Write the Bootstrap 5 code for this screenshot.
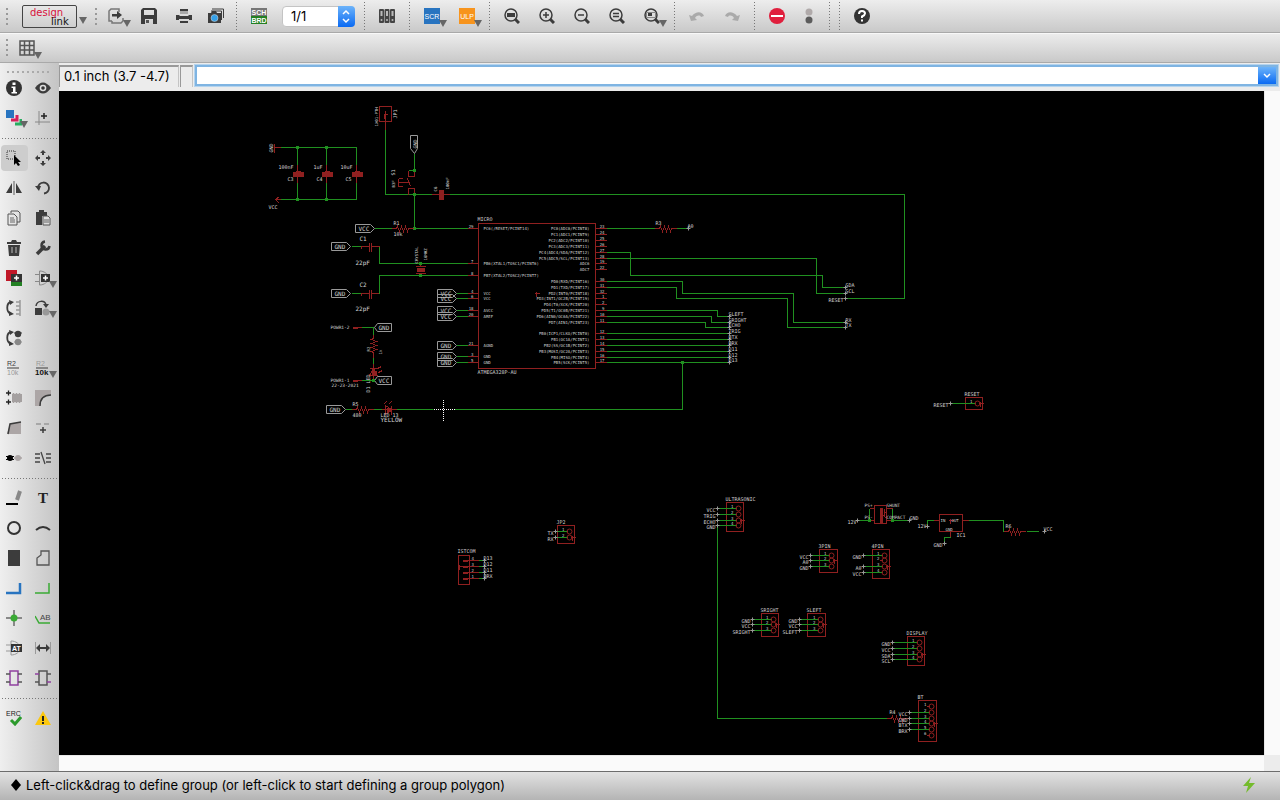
<!DOCTYPE html>
<html lang="en">
<head>
<meta charset="utf-8">
<meta name="viewport" content="width=device-width, initial-scale=1">
<title>Schematic editor</title>
<link rel="stylesheet" href="https://cdn.jsdelivr.net/npm/bootstrap@5.3.0/dist/css/bootstrap.min.css">
<style>
body{font-family:Inter,"Liberation Sans",sans-serif;font-size:13px;line-height:16px;color:#000;background:#ececec}
.bar{background:linear-gradient(#ededed,#c9c9c9);border-bottom:1px solid #a9a9a9}
.bar-top{height:33px;padding-left:2px}
.bar-sub{height:30px;padding-left:2px;box-shadow:inset 0 1px #f8f8f8}
.tool{border:0;background:none;padding:0;height:30px;width:35px;position:relative;display:flex;align-items:center;justify-content:center;color:#3c3c3c;flex:none}
.tool.slim{width:30px}
.tool svg,.pick svg{display:block}
.drop::after{content:"";position:absolute;left:calc(50% + 7px);top:19px;border:4px solid transparent;border-top:7px solid #666;border-bottom:0}
.sep{width:10px;height:28px;flex:none;background:repeating-linear-gradient(#777 0 1px,transparent 1px 3px) center/1px 100% no-repeat}
.grip{width:10px;height:17px;flex:none;background:repeating-linear-gradient(#999 0 2px,transparent 2px 5px) center/2px 100% no-repeat}
.brand{width:55px;height:23px;border:1px solid #444;border-radius:2px;background:none;padding:0;position:relative;font:10px/10px "DejaVu Sans",sans-serif;color:#d8103c;margin-left:10px}
.brand span{position:absolute;left:7px;top:2px}
.brand span+span{left:28px;top:11px;color:#111}
.tool.brandcaret{width:14px}
.brandcaret::after{left:2px;top:16px}
.pick{position:relative;width:73px;margin:0 4px 0 6px}
.pick select{appearance:none;width:100%;height:21px;border:1px solid #c4c4c4;border-radius:4px;background:#fff;padding:0 8px;font-size:13px;line-height:18px;color:#000}
.pick svg{position:absolute;right:0;top:0;pointer-events:none}
.palette{width:59px;flex:none;padding-right:2px;background:linear-gradient(90deg,#efefef,#c4c4c4)}
.palette .tool{width:50%}
.palette .drop::after{top:18px;left:calc(50% + 6px)}
.rule{height:10px;margin:0 0 0 2px;background:repeating-linear-gradient(90deg,#777 0 1px,transparent 1px 3px) center/100% 1px no-repeat}
.topgrip{height:10px;margin:4px 5px -4px 7px;background:repeating-linear-gradient(90deg,#aaa 0 2px,transparent 2px 5px) center/100% 2px no-repeat}
.tool.picked::before{content:"";position:absolute;inset:2px 1px;border-radius:4px;background:#cdcdcd}
.tool.picked svg{position:relative}
.cmd{height:28px;padding:2px 2px 4px 0}
.well{border:solid #999;border-width:2px 0 0 1px;border-right:1px solid #c4c4c4;padding:0 4px;line-height:19px;width:120px;white-space:nowrap}
.well.tiny{width:13px;margin:0 2px 0 1px}
.combo{border:2px solid #7fb4e2;box-shadow:0 0 0 1px #b5d4ee;background:#fff;height:21px}
.combo input{border:0;outline:0;min-width:0;padding:0 4px}
.combo button{width:18px;border:0;padding:0;background:linear-gradient(#6cb3fa,#0a6af3);display:flex;align-items:center;justify-content:center}
.board{background:#000;min-height:0}
.vbar{width:16px;flex:none;background:#fafafa;border-left:1px solid #e8e8e8}
.hbar{height:16px;background:#fafafa;border-top:1px solid #e8e8e8;margin-right:16px}
.status{height:29px;border-top:1px solid #6d6d6d;background:linear-gradient(#e2e2e2,#b4b4b4);padding:0 24px 2px 10px}
.wire{stroke:#209020;fill:none;shape-rendering:crispEdges}
.part{stroke:#902020;fill:none;shape-rendering:crispEdges}
.solid{fill:#902020;shape-rendering:crispEdges}
.knot{fill:#209020;shape-rendering:crispEdges}
.flag{stroke:#999;fill:none}
.ink{fill:#d4d4d4;font-family:"DejaVu Sans Mono",monospace}
</style>
</head>
<body class="vh-100 d-flex flex-column overflow-hidden">

<header class="bar bar-top d-flex align-items-center">
  <span class="grip"></span>
  <button class="brand" type="button" aria-label="design link"><span>design</span><span>link</span></button>
  <button class="tool drop brandcaret" type="button" aria-label="design link menu"></button>
  <span class="grip"></span>
  <button class="tool slim drop" type="button" aria-label="Export"><svg width="16" height="16" viewBox="0 0 16 16"><path d="M11 4V1H3L1 3v10h3M4 13v2h9l2-2v-3" fill="none" stroke="#777" stroke-width="1.500"/><path d="M4 6h5V3l5 4-5 4V8.500H4z" fill="#3c3c3c"/></svg></button>
  <button class="tool" type="button" aria-label="Save"><svg width="16" height="16" viewBox="0 0 16 16"><path fill="#3c3c3c" fill-rule="evenodd" d="M2 0h12l2 2v14H0V2zM3 2v5h10V2zM4 11v5h8v-5z"/><path d="M5 12h3v3H5z" fill="#555"/></svg></button>
  <button class="tool" type="button" aria-label="Print"><svg width="16" height="16" viewBox="0 0 16 16"><path fill="#3c3c3c" d="M4 1h8v2H4zM0 7h3l1 1h8l1-1h3v5h-3v-1H3v1H0zM4 13h8v2H4z"/><path d="M4 3h8v3H4z" fill="#aaa"/></svg></button>
  <button class="tool slim" type="button" aria-label="Capture"><svg width="16" height="16" viewBox="0 0 16 16"><path d="M4 1h11.500v9" fill="none" stroke="#3c3c3c"/><path fill="#3c3c3c" d="M0 5h3l1-2h4l1 2h4v10H0z"/><path d="M3 3h10.500v9" fill="none" stroke="#3c3c3c"/><circle cx="6.500" cy="10" r="3.500" fill="#35a0e8" stroke="#ddd" stroke-width=".5"/></svg></button>
  <span class="sep"></span>
  <button class="tool" type="button" aria-label="Schematic / board"><svg width="16" height="16" viewBox="0 0 16 16"><path fill="#777" d="M0 0h16v8H0z"/><path fill="#238023" d="M0 8h16v8H0z"/><g fill="#fff" font-family="Liberation Sans" font-weight="700" font-size="7" text-anchor="middle"><text x="8" y="7">SCH</text><text x="8" y="15">BRD</text></g></svg></button>
  <div class="pick"><select aria-label="Sheet"><option>1/1</option></select>
    <svg width="17" height="21" viewBox="0 0 17 21"><defs><linearGradient id="blue" x2="0" y2="1"><stop stop-color="#6cb3fa"/><stop offset="1" stop-color="#0a6af3"/></linearGradient></defs><path fill="url(#blue)" d="M0 0h13q4 0 4 4v13q0 4-4 4H0z"/><path d="M5 8l3-3 3 3M5 13l3 3 3-3" fill="none" stroke="#fff" stroke-width="1.500"/></svg></div>
  <span class="sep"></span>
  <button class="tool" type="button" aria-label="Libraries"><svg width="16" height="16" viewBox="0 0 16 16"><g fill="#444"><rect y="1" width="5" height="14" rx="1"/><rect x="5.500" y="1" width="5" height="14" rx="1"/><rect x="11" y="1" width="5" height="14" rx="1"/></g><g fill="#bbb"><path d="M1.500 3h2v5h-2zM7 3h2v5H7zM12.500 3h2v5h-2z"/><circle cx="2.500" cy="12" r="1"/><circle cx="8" cy="12" r="1"/><circle cx="13.500" cy="12" r="1"/></g></svg></button>
  <span class="sep"></span>
  <button class="tool drop" type="button" aria-label="Run script"><svg width="16" height="16" viewBox="0 0 16 16"><path fill="#2874c0" d="M0 0h16v16H0z"/><text x="8" y="11" fill="#fff" font-family="Liberation Sans" font-size="7" text-anchor="middle">SCR</text></svg></button>
  <button class="tool drop" type="button" aria-label="Run ULP"><svg width="16" height="16" viewBox="0 0 16 16"><path fill="#f7941d" d="M0 0h16v16H0z"/><text x="8" y="11" fill="#fff" font-family="Liberation Sans" font-size="7" text-anchor="middle">ULP</text></svg></button>
  <span class="sep"></span>
  <button class="tool" type="button" aria-label="Zoom to fit"><svg width="16" height="16" viewBox="0 0 16 16"><circle cx="7" cy="7" r="6" fill="none" stroke="#3c3c3c" stroke-width="1.500"/><path d="M11 11l4 4" stroke="#3c3c3c" stroke-width="3"/><path d="M3 5h8v4H3z" fill="#3c3c3c"/></svg></button>
  <button class="tool" type="button" aria-label="Zoom in"><svg width="16" height="16" viewBox="0 0 16 16"><circle cx="7" cy="7" r="6" fill="none" stroke="#3c3c3c" stroke-width="1.500"/><path d="M11 11l4 4" stroke="#3c3c3c" stroke-width="3"/><path d="M4 7h6M7 4v6" stroke="#3c3c3c" stroke-width="1.500"/></svg></button>
  <button class="tool" type="button" aria-label="Zoom out"><svg width="16" height="16" viewBox="0 0 16 16"><circle cx="7" cy="7" r="6" fill="none" stroke="#3c3c3c" stroke-width="1.500"/><path d="M11 11l4 4" stroke="#3c3c3c" stroke-width="3"/><path d="M4 7h6" stroke="#3c3c3c" stroke-width="1.500"/></svg></button>
  <button class="tool" type="button" aria-label="Redraw"><svg width="16" height="16" viewBox="0 0 16 16"><circle cx="7" cy="7" r="6" fill="none" stroke="#3c3c3c" stroke-width="1.500"/><path d="M11 11l4 4" stroke="#3c3c3c" stroke-width="3"/><path d="M4 5.500h6M4 8.500h6" stroke="#3c3c3c" stroke-width="1.300"/></svg></button>
  <button class="tool drop" type="button" aria-label="Zoom select"><svg width="16" height="16" viewBox="0 0 16 16"><circle cx="7" cy="7" r="6" fill="none" stroke="#3c3c3c" stroke-width="1.500"/><path d="M11 11l4 4" stroke="#3c3c3c" stroke-width="3"/><path d="M2.500 4.500h9v5h-9z" fill="none" stroke="#888"/><path d="M4 5h4v3H4z" fill="#3c3c3c"/></svg></button>
  <span class="sep"></span>
  <button class="tool" type="button" aria-label="Undo"><svg width="16" height="16" viewBox="0 0 16 16"><path fill="#aaa" d="M0 7l2 6 6-1-2-2c2-3 5-3 6-1l3-1C13 3 7 3 3 8z"/></svg></button>
  <button class="tool" type="button" aria-label="Redo"><svg width="16" height="16" viewBox="0 0 16 16"><path fill="#aaa" d="M16 7l-2 6-6-1 2-2C8 7 5 7 4 9L1 8C3 3 9 3 13 8z"/></svg></button>
  <span class="sep"></span>
  <button class="tool" type="button" aria-label="Stop"><svg width="16" height="16" viewBox="0 0 16 16"><circle cx="8" cy="8" r="8" fill="#e01f3d"/><path d="M2 7h12v2H2z" fill="#fff"/></svg></button>
  <button class="tool slim" type="button" aria-label="Go"><svg width="16" height="16" viewBox="0 0 16 16"><circle cx="8" cy="4" r="3.500" fill="#b0aaaa"/><circle cx="8" cy="12" r="3.500" fill="#5c5c5c"/></svg></button>
  <span class="sep"></span><span class="sep"></span>
  <button class="tool" type="button" aria-label="Help"><svg width="16" height="16" viewBox="0 0 16 16"><circle cx="8" cy="8" r="8" fill="#333"/><path d="M5 6q0-3 3-3t3 2.500q0 1.500-3 3V10" fill="none" stroke="#fff" stroke-width="2"/><path d="M7 11.500h2v2H7z" fill="#fff"/></svg></button>
</header>

<div class="bar bar-sub d-flex align-items-center">
  <span class="grip"></span>
  <button class="tool slim drop" type="button" aria-label="Grid"><svg width="16" height="16" viewBox="0 0 16 16"><path d="M1 1h14v14H1zM1 5.500h14M1 10h14M5.500 1v14M10.500 1v14" fill="none" stroke="#555" stroke-width="1.500"/></svg></button>
</div>

<div class="d-flex flex-grow-1" style="min-height:0">
  <nav class="palette" aria-label="Drawing tools">
    <div class="topgrip"></div>
    <div id="tools" class="pt-1"></div>
  </nav>
  <main class="d-flex flex-column flex-grow-1" style="min-width:0">
    <div class="cmd d-flex">
      <div class="well">0.1 inch (3.7 -4.7)</div>
      <div class="well tiny"></div>
      <div class="combo d-flex flex-grow-1">
        <input type="text" class="flex-grow-1" aria-label="Command line">
        <button type="button" aria-label="History"><svg width="8" height="6" viewBox="0 0 8 6"><path d="M1 1l3 3 3-3" fill="none" stroke="#fff" stroke-width="1.500"/></svg></button>
      </div>
    </div>
    <div class="d-flex flex-grow-1" style="min-height:0">
      <div class="board flex-grow-1"><svg id="sheet" class="d-block w-100 h-100" viewBox="59 91 1205 664" role="img" aria-label="Schematic"></svg></div>
      <div class="vbar"></div>
    </div>
    <div class="hbar"></div>
  </main>
</div>

<footer class="status d-flex align-items-center justify-content-between">
  <span class="d-flex align-items-center"><svg class="me-1" width="12" height="12" viewBox="0 0 12 12"><path d="M6 0l5 6-5 6-5-6z"/></svg>Left-click&amp;drag to define group (or left-click to start defining a group polygon)</span>
  <svg width="14" height="16" viewBox="0 0 14 16"><path d="M9 0L1 9h5l-2 7 9-10H7z" fill="#74bb2c"/></svg>
</footer>

<script>
// Tool palette: [name, icon markup, extra class]; '-' draws a divider
const D='#3c3c3c', S=(d,c=D,w=1.5)=>`<path d="${d}" fill="none" stroke="${c}" stroke-width="${w}"/>`, F=(d,c=D)=>`<path d="${d}" fill="${c}"/>`;
const T=(x,y,s,c=D,z=7,k='')=>`<text x="${x}" y="${y}" font-family="Liberation Sans" font-size="${z}" fill="${c}" ${k}>${s}</text>`;
const tools=[
['Info','<circle cx="8" cy="8" r="8" fill="#333"/>'+F('M6.500 2.500h3v2.500h-3zM5.500 6.500h4V12H11v1.500H5.500V12H7V8H5.500z','#fff')],
['Show',F('M0 8Q8-3 16 8 8 19 0 8z')+'<circle cx="8" cy="8" r="3.300" fill="#ddd"/><circle cx="8" cy="8" r="1.800" fill="#333"/>'],
['Layers',F('M0 0h8v8H0z','#2874c0')+S('M11 5v5H5','#d81e5b',3)+S('M15 9v5H9','#27ae60',3),'drop'],
['Mark',S('M4 1v14M0 12h15','#888',1)+S('M6 6h6M9 3v6','#222')],'-',
['Group','<path d="M1 1h8v8H1z" fill="none" stroke="#333" stroke-dasharray="1 1"/>'+F('M8 5v10l2-2 2 3 2-1-2-3h3z','#000'),'picked'],
['Move',F('M8 0l3 3H9v2H7V3H5zM8 16l3-3H9v-2H7v2H5zM0 8l3-3v2h2v2H3v2zM16 8l-3-3v2h-2v2h2v2z')],
['Mirror',F('M6 3v10H0zM10 3v10h6z')+S('M8 1v14','#888')],
['Rotate',S('M3 8a5.500 5.500 0 1 1 6 5.500',D,1.8)+F('M0 6h6l-2 5z')],
['Copy',S('M5 3V1h7l2 2v9h-3M2 4h6l3 3v8H2z','#555',1)+S('M4 8h4M4 10h5M4 12h5','#666',1)],
['Paste',F('M1 2h3V0h5v2h3v4H7v9H1z')+'<path d="M8 6h5l2 2v7H8z" fill="#ddd" stroke="#555"/>'+S('M9 10h5M9 12h5','#666',1)],
['Delete',F('M1 2h4l1-2h4l1 2h4v2H1zM2 5h12l-1 11H3z')+S('M6 7v6M10 7v6','#bbb',1)],
['Change',S('M2 14l8-8','#3c3c3c',3.500)+S('M10 1.500A4 4 0 1 0 14.500 6',D,2.500)],
['Add',F('M0 0h11v11H0z','#c01828')+F('M5 10h11v6H5z','#238023')+F('M5 4h11v8H5z','#333')+S('M8 8h5M10.500 5.500v5','#fff')],
['Replace',S('M0 4.500h5M0 11.500h5M4.500 1v14c5 0 8-3 10-7-2-4-5-7-10-7','#888',1)+F('M6 4h9v8H6z','#333')+S('M8 8h5M10.500 5.500v5','#fff'),'drop'],
['Pin swap',S('M5 2C0 3 0 12 5 14',D,1.8)+F('M3 0l5 2-4 3zM3 11l5 3-5 2z')+S('M14 0v16M10 2h4M10 6h4M10 10h4M10 14h4','#999',1.500)],
['Gate swap',S('M1 6C2 0 10 0 11 5')+F('M8 4h6l-3 4zM0 8h7v7H0z')+'<circle cx="11" cy="12" r="3.500" fill="#999"/>','drop'],
['Replace gates',S('M5 2C0 3 0 12 5 14',D,1.8)+F('M3 0l5 2-4 3zM3 11l5 3-5 2z')+'<circle cx="12" cy="4" r="3.200" fill="#3c3c3c"/><circle cx="12" cy="12" r="3.200" fill="#888"/>'+S('M8 3h8','#3c3c3c',1)+S('M8 12h8','#888',1)],
null,
['Name',T(1,6,'R2')+S('M1 8h12',D,1)+T(1,15,'10k','#999')],
['Value',T(1,6,'R2','#999')+S('M1 8h12',D,1)+T(0,15,'10k','#111',8,'font-weight="700"'),'drop'],
['Smash',F('M6 4h10v8H6z','#a5a0a0')+S('M7.500 3v10M10.500 3v10M13.500 3v10','#a5a0a0',1.500)+S('M0 3h5M2.500 .5v5M0 12h5M2.500 9.500v5','#222',1.300)],
['Miter',F('M0 0h16v5Q5 5 5 16H0z','#aca6a6')+S('M5 16Q5 5 16 5')],
['Split',F('M4 4l11-2v12H1z','#aca6a6')+S('M2 14L4 4l11-2')],
['Optimize',S('M1 4h5M9 4h5','#999')+S('M5 10h6M8 7v6',D,1.500)],
['Invoke',F('M0 6h8v1H0zM0 9h8v1H0z','#000')+'<circle cx="4" cy="8" r="3" fill="#000"/><circle cx="12" cy="8" r="3" fill="#aca6a6"/>'+S('M8 8h8','#aca6a6')],
['Divide',S('M0 4h5M0 8h5M0 12h5M11 4h5M11 8h5M11 12h5M6 2l4 12','#444',1.300)],'-',
['Line',S('M0 14h12','#000',2)+S('M11 10l3-9','#888',4)],
['Text','<text x="8" y="13" text-anchor="middle" font-family="Liberation Serif" font-size="15" font-weight="700" fill="#222">T</text>'],
['Circle','<circle cx="8" cy="8" r="6" fill="none" stroke="#333" stroke-width="2"/>'],
['Arc',S('M1 10Q8 4 15 10','#333',2)],
['Rectangle',F('M2 0h12v16H2z')],
['Polygon',S('M2 15V8l4-3V1h8v14z','#555',1.300)],
['Bus',S('M0 13h14V3','#2874c0',2.5)],
['Net',S('M0 13h14V3','#3aaa35',1.500)],
['Junction',S('M8 0v16M0 8h16','#888',2)+'<circle cx="8" cy="8" r="3.500" fill="#3aaa35"/>'],
['Label',S('M0 6l4 7h11','#3aaa35',1.500)+T(5,10,'AB','#444',8)],
['Attribute',S('M0 5h5M0 11h5M5 1v14c5 0 9-3 9-7s-4-7-9-7','#999',1)+F('M5 4h11v8H5z','#333')+T(6,11,'AT','#fff',7,'font-weight="700"')],
['Dimension',S('M.5 2v12M15.500 2v12','#999',1)+F('M1 8l4-4v3h6V4l4 4-4 4V9H5v3z')],
['Module',S('M4 1h8v14H4z','#9040a0',1.500)+S('M0 4h4M0 12h4M12 4h4M12 12h4','#555',1.500)],
['Port',S('M4 1h8v14H4z','#555',1.500)+S('M0 4h4M12 12h4','#9040a0',1.500)+S('M0 12h4M12 4h4','#555',1.500)],'-',
['ERC',T(0,6,'ERC','#222',7)+S('M5 10l4 4 6-7','#2c9a2c',3)],
['Errors',F('M8 1l8 14H0z','#fcc80e')+S('M8 6v5M8 12v2','#222',2)]
];
let html='',n=0;
for(const t of tools){
  if(t==='-'){html+='<div class="rule"></div>';continue}
  if(n%2===0)html+='<div class="d-flex">';
  html+=t?`<button type="button" class="tool ${t[2]||''}" aria-label="${t[0]}"><svg width="16" height="16" viewBox="0 0 16 16">${t[1]}</svg></button>`:'<span></span>';
  if(n%2===1)html+='</div>';
  n++;
}
const palette=document.getElementById('tools');
palette.classList.remove('pt-1');
palette.innerHTML=html;

// Schematic drawing helpers, in sheet units
let g='';
const wire=d=>g+=`<path class="wire" d="${d}"/>`, part=d=>g+=`<path class="part" d="${d}"/>`;
const solid=(x,y,w,h)=>g+=`<rect class="solid" x="${x}" y="${y}" width="${w}" height="${h}"/>`;
const knot=(x,y)=>g+=`<rect class="knot" x="${x-1.5}" y="${y-1.5}" width="3" height="3"/>`;
const ink=(x,y,s,z=5,a='start')=>g+=`<text class="ink" x="${x}" y="${y}" font-size="${z}" text-anchor="${a}">${s}</text>`;
const up=(x,y,s,z=5)=>g+=`<text class="ink" transform="translate(${x} ${y}) rotate(-90)" font-size="${z}">${s}</text>`;
const tick=(x,y)=>g+=`<path class="flag" d="M${x-2} ${y}h4M${x} ${y-2}v4"/>`;
const tag=(x,y,s)=>{g+=`<path class="flag" d="M${x} ${y-4}h15l4 4-4 4h-15z"/>`;ink(x+3,y+2,s,6)};
const tagL=(x,y,s)=>{g+=`<path class="flag" d="M${x+17} ${y-4}h-14l-3 4 3 4h14z"/>`;ink(x+4,y+2,s,6)};
const res=(x,y)=>part(`M${x} ${y}h5l1-2 2 5 2-5 2 5 2-5 2 5 1-3h5`);
const plus=(x,y)=>part(`M${x-2} ${y}h5M${x} ${y-2}v5`);

// decoupling capacitors
wire('M280 147H356V199H280M297 147V199M326 147V199');
part('M274 143v9M274 147h6M280 199h-5M279 196l-4 3 4 4');
for(const x of [297,326,356]){part(`M${x} 164v18`);solid(x-5,171,11,5);solid(x-2,170,5,1)}
for(const x of [297,326]){knot(x,147);knot(x,199)}
ink(293,168,'100nF',5,'end');ink(322,168,'1uF',5,'end');ink(352,168,'10uF',5,'end');
ink(287,180,'C3');ink(316,180,'C4');ink(345,180,'C5');ink(268,208,'VCC');up(272,152,'GND');
// jumper, reset button and series capacitor
part('M379 106h12v15h-12zM385 110v19M383 114h4M384 113v5');up(377,126,'1X01-PTH',4);up(396,118,'JP1',5);
wire('M385 129V194H431M449 194H904V298H846M414 153V170H408M414 194V228M414 228H467');
g+='<path class="flag" d="M410 135h7v13l-3 5-4-5z"/>';up(416,148,'GND',5);
part('M414 170v6h-6v-6M398 178h4M398 178v8h4M398 182h11M407 178l3 8M408 194v-6h6v6M431 194h18');
solid(438,189,5,10);knot(414,170);knot(414,194);knot(414,228);
up(394,175,'S1');up(394,187,'B3F',4);up(436,191,'C6',4);up(448,189,'100nF',4);
// left-hand nets
tag(355,228,'VCC');wire('M374 228H391');res(391,228);ink(393,224,'R1');ink(393,235,'10k');
for(const [y,c,b] of [[246,'C1',240],[293,'C2',286]]){
  tag(331,y,'GND');wire(`M351 ${y}H361`);part(`M361 ${y}h8M369 ${y-4}v9M371 ${y-4}v9M371 ${y}h8M361 ${y-1}v3`);ink(359,b,c,6)}
ink(355,264,'22pF',6);ink(355,310,'22pF',6);
wire('M379 246V263H467M379 293V275H467');
part('M420 263v3M415 266h10M417 268h7v3h-7zM415 273h10M420 273v3');solid(417,268,7,3);knot(420,263);knot(420,275);
up(417,263,'CRYSTAL',4);up(426,260,'16MHZ',4);
for(const [y,s] of [[293,'VCC'],[298,'VCC'],[310,'VCC'],[316,'VCC'],[345,'GND'],[356,'GND'],[362,'GND']]){tag(437,y,s);wire(`M456 ${y}H467`)}
// controller
part('M478 223H595V368H478z');plus(536,293);
ink(477,220,'MICRO');ink(477,373,'ATMEGA328P-AU');
for(const [y,p,s] of [[228,29,'PC6(/RESET/PCINT14)'],[263,7,'PB6(XTAL1/TOSC1/PCINT6)'],[275,8,'PB7(XTAL2/TOSC2/PCINT7)'],[293,4,'VCC'],[298,6,'VCC'],[310,18,'AVCC'],[316,20,'AREF'],[345,21,'AGND'],[356,3,'GND'],[362,5,'GND']]){
  part(`M467 ${y}H478`);ink(473,y-1,p,4,'end');ink(483,y+1,s,4)}
const rp=[[228,23,'PC0(ADC0/PCINT8)'],[234,24,'PC1(ADC1/PCINT9)'],[240,25,'PC2(ADC2/PCINT10)'],[246,26,'PC3(ADC3/PCINT11)'],[252,27,'PC4(ADC4/SDA/PCINT12)'],[258,28,'PC5(ADC5/SCL/PCINT13)'],[263,19,'ADC6'],[269,22,'ADC7'],[281,30,'PD0(RXD/PCINT16)'],[287,31,'PD1(TXD/PCINT17)'],[293,32,'PD2(INT0/PCINT18)'],[298,1,'PD3(INT1/OC2B/PCINT19)'],[304,2,'PD4(T0/XCK/PCINT20)'],[310,9,'PD5(T1/OC0B/PCINT21)'],[316,10,'PD6(AIN0/OC0A/PCINT22)'],[322,11,'PD7(AIN1/PCINT23)'],[333,12,'PB0(ICP1/CLKO/PCINT0)'],[339,13,'PB1(OC1A/PCINT1)'],[345,14,'PB2(SS/OC1B/PCINT2)'],[351,15,'PB3(MOSI/OC2A/PCINT3)'],[357,16,'PB4(MISO/PCINT4)'],[362,17,'PB5(SCK/PCINT5)']];
for(const [y,p,s] of rp){part(`M595 ${y}H606`);ink(604,y-1,p,4,'end');ink(589,y+1,s,4,'end')}
// right-hand nets
wire('M606 228H654M676 228H688M606 252H630V275H822V287H846M606 258H816V293H846M606 281H682V293H793V322H846M606 287H676V298H787V327H846');
wire('M606 310H717V316H729M606 316H711V322H729M606 322H705V327H729M606 333H729M606 339H729M606 345H729M606 351H729M606 357H729M606 362H729M682 362V409H396');
knot(682,362);res(654,228);ink(655,224,'R3');tick(688,228);ink(687,227,'A0');
[[316,'SLEFT'],[322,'SRIGHT'],[327,'ECHO'],[333,'TRIG'],[339,'BTX'],[345,'BRX'],[351,'D11'],[357,'D12'],[362,'D13']].forEach(([y,s])=>{tick(729,y);ink(728,y-1,s)});
[[287,'SDA'],[293,'SCL'],[322,'RX'],[327,'TX']].forEach(([y,s])=>{tick(845,y);ink(845,y-1,s)});
ink(843,301,'RESET',5,'end');tick(845,298);
// power connector and indicator
wire('M361 327H373V334M373 357V363M361 380H373');
for(const y of [327,380]){solid(352,y-1,5,2);part(`M352 ${y}h9`)}
part('M373 334v4l-2 1 5 2-5 2 5 2-5 2 5 2-5 2 2 1v5M373 363v17M369 375h8l-4-7zM369 368h9M377 368l4-2M378 372l4-2');
solid(371,370,5,4);tagL(374,327,'GND');tagL(374,380,'VCC');knot(373,380);
ink(330,328,'POWR1-2',4.5);ink(330,381,'POWR1-1',4.5);ink(331,386,'22-23-2021',4.5);
up(369,351,'R2',4);up(381,354,'1k',4);up(369,392,'D1 LED',5);
tag(326,409,'GND');wire('M345 409H352M372 409H381');res(351,409);
part('M381 409h15M385 405v9l6-5zM391 405v9M383 404l3-3M388 404l3-3');solid(386,407,4,4);
ink(352,405,'R5');ink(352,416,'480');ink(380,416,'LED_13');ink(380,421,'YELLOW',6);
g+='<path d="M433 409h21M443 399v21" stroke="#000" stroke-width="3"/><path d="M433 409h21M443 399v21" stroke="#fff" stroke-dasharray="1 1" shape-rendering="crispEdges"/>';
// pin headers: name, box, pin column, wire start, pins [y, net]
const headers=[
['ULTRASONIC',726,502,17,29,738,717,[[508,'VCC'],[514,'TRIG'],[520,'ECHO'],[525,'GND']]],
['3PIN',819,549,18,23,831,810,[[555,'VCC'],[560,'A0'],[566,'GND']]],
['4PIN',872,549,17,29,884,863,[[555,'GND'],[560,''],[566,'A0'],[572,'VCC']]],
['SRIGHT',761,613,17,23,773,752,[[619,'GND'],[624,'VCC'],[630,'SRIGHT']]],
['SLEFT',807,613,18,23,820,799,[[619,'GND'],[624,'VCC'],[630,'SLEFT']]],
['DISPLAY',907,636,17,29,919,892,[[642,'GND'],[648,'VCC'],[654,'SDA'],[659,'SCL']]],
['BT',918,700,18,41,931,909,[[706,''],[712,'VCC'],[718,'GND'],[723,'BTX'],[729,'BRX'],[735,'']]],
['JP2',557,525,17,18,569,555,[[531,'TX'],[537,'RX']]],
['RESET',965,397,17,12,977,950,[[403,'RESET']]]];
wire('M717 525V718H886');res(886,718);ink(889,713,'R4');
for(const [s,x,y,w,h,c,a,pins] of headers){
  part(`M${x} ${y}h${w}v${h}h${-w}z`);ink(x-1,y-2,s);
  pins.forEach(([py,net],i)=>{
    g+=`<circle cx="${c}" cy="${py}" r="2.500" fill="none" stroke="#902020"/>`;part(`M${c-5} ${py}h3`);
    ink(c-5,py-1,i+1,4,'end');
    if(net){wire(`M${a} ${py}H${c-3}`);tick(a,py);ink(a-2,py+3,net,5,'end')}
  });
  plus(c+3,pins[Math.floor(pins.length/2)][0]);
}
// programming header
part('M458 555h11v29h-11z');ink(457,552,'ISTCOM');plus(459,566);
[[560,'D13',4],[566,'D12',3],[572,'D11',2],[578,'BRX',1]].forEach(([y,s,p])=>{part(`M462 ${y}h16`);solid(462,y-1,5,2);wire(`M478 ${y}h6`);tick(484,y);ink(483,y-1,s);ink(471,y-1,p,4)});
// current shunt
wire('M857 520H869V508M909 520H892V508');part('M874 505h12v18h-12zM869 508h5M869 520h5M886 508h6M886 520h6M884 508v8M885 512l-2 3 3 3');
solid(879,507,3,15);knot(869,520);knot(892,520);tick(857,520);tick(909,520);
ink(864,506,'PS+',4.5);ink(886,506,'SHUNT',4.5);ink(864,518,'PS-',4.5);ink(886,518,'COMPACT',4.5);
ink(856,523,'12V',5,'end');ink(909,519,'GND');
// regulator
part('M939 514h23v17h-23zM933 520h6M962 520h6M950 531v6');plus(950,520);
wire('M927 525V520H933M968 520H1003V531M950 537H944V543M1026 531H1038');res(1003,531);
tick(927,526);tick(944,543);tick(1044,531);
ink(926,527,'12V',5,'end');ink(942,546,'GND',5,'end');ink(956,536,'IC1');ink(940,521,'IN',4);ink(951,521,'OUT',4);ink(945,530,'GND',4);
ink(1005,527,'R6');ink(1043,530,'VCC');
document.getElementById('sheet').innerHTML='<g transform="translate(.5 .5)">'+g+'</g>';
</script>
<script src="https://cdn.jsdelivr.net/npm/bootstrap@5.3.0/dist/js/bootstrap.bundle.min.js"></script>
</body>
</html>
